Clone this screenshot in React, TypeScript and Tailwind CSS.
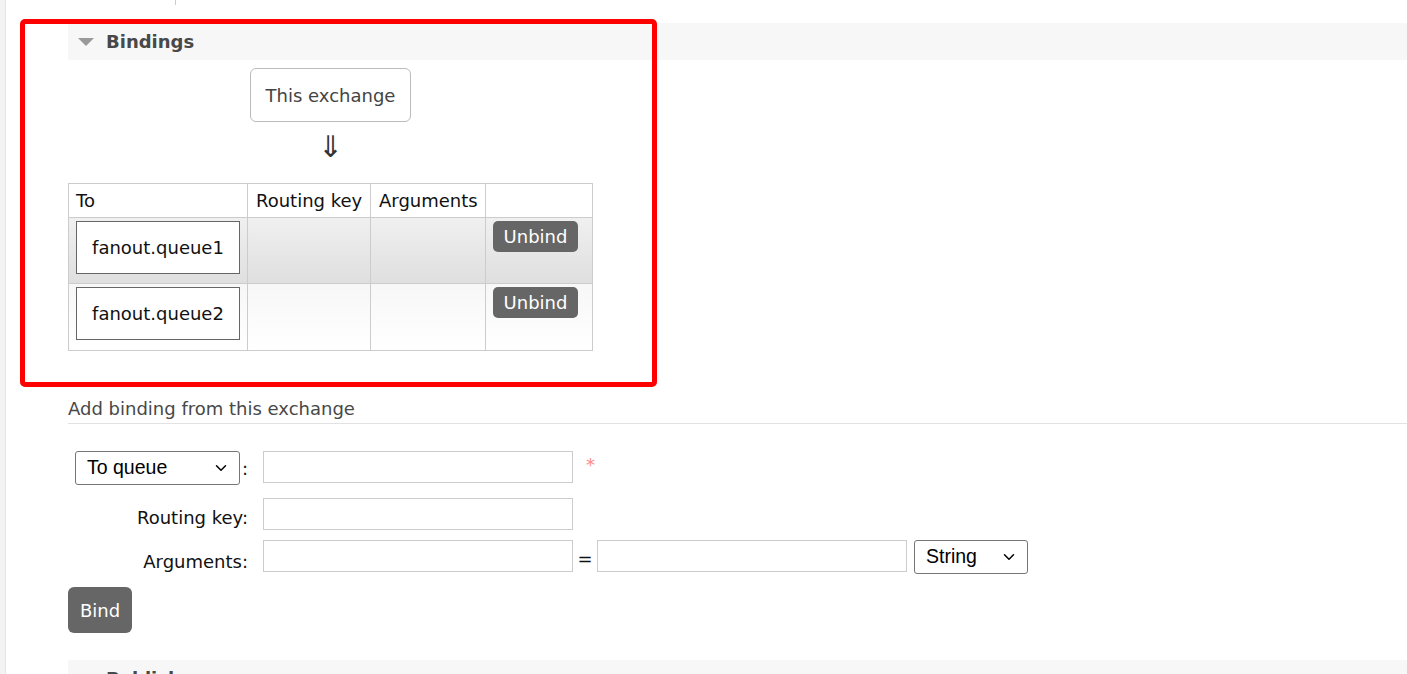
import { ChevronDown } from "lucide-react";

const font = { fontFamily: '"DejaVu Sans", Verdana, sans-serif' };

function Caret() {
  return <span className="inline-block w-0 h-0 border-l-[8px] border-r-[8px] border-t-[8px] border-l-transparent border-r-transparent border-t-[#999]" />;
}

function SectionHeader({ title }: { title: string }) {
  return (
    <div className="h-[37px] bg-[#f7f7f7] flex items-center pl-[10px] gap-[12px]">
      <Caret />
      <span className="text-[18px] font-bold text-[#484848] leading-none">{title}</span>
    </div>
  );
}

function Select({ value, width }: { value: string; width: string }) {
  return (
    <div className={`relative h-[34px] ${width} border border-[#767676] rounded-[3px] bg-white flex items-center pl-[11px]`}>
      <span className="text-[19.5px] text-black leading-none" style={{ fontFamily: '"Liberation Sans", Arial, sans-serif' }}>{value}</span>
      <ChevronDown className="absolute right-[9px] top-[7px] w-[18px] h-[18px] text-black" strokeWidth={2} />
    </div>
  );
}

const rows = ["fanout.queue1", "fanout.queue2"];

export default function App() {
  return (
    <div className="relative h-screen overflow-hidden bg-white flex text-[18px]" style={font}>
      <div className="w-[6px] bg-[#f3f3f3] border-r border-[#e6e6e6]" />
      <div className="flex-1">
        <div className="h-[5px] ml-[169px] border-l border-[#cccccc]" />
        <div className="pl-[62px] pt-[18px]">
          <SectionHeader title="Bindings" />

          <div className="w-[525px] flex flex-col items-center">
            <div className="mt-[8px] w-[161px] h-[54px] rounded-[6px] border border-[#bbbbbb] flex items-center justify-center text-[#444]">This exchange</div>
            <div className="h-[61px] flex items-center justify-center text-[30px] text-[#333] leading-none pb-[12px]">⇓</div>
          </div>

          <div className="w-[525px] border border-[#cccccc] text-[#111] whitespace-nowrap">
            <div className="flex h-[34px] border-b border-[#cccccc]">
              <div className="w-[179px] border-r border-[#cccccc] flex items-center px-[7px]">To</div>
              <div className="w-[123px] border-r border-[#cccccc] flex items-center px-[8px]">Routing key</div>
              <div className="w-[115px] border-r border-[#cccccc] flex items-center px-[8px]">Arguments</div>
              <div className="flex-1" />
            </div>
            {rows.map((q, i) => (
              <div key={q} className={`flex h-[66px] ${i === 0 ? "border-b border-[#cccccc] bg-gradient-to-b from-[#f0f0f0] to-[#dfdfdf]" : "bg-gradient-to-b from-[#f7f7f7] to-white"}`}>
                <div className="w-[179px] border-r border-[#cccccc] pl-[7px] pt-[3px]">
                  <div className="w-[164px] h-[53px] bg-white border border-[#666] flex items-center justify-center">{q}</div>
                </div>
                <div className="w-[123px] border-r border-[#cccccc]" />
                <div className="w-[115px] border-r border-[#cccccc]" />
                <div className="flex-1 pl-[7px] pt-[3px]">
                  <button className="w-[85px] h-[31px] rounded-[5px] bg-[#666] text-white leading-none">Unbind</button>
                </div>
              </div>
            ))}
          </div>

          <h3 className="mt-[47px] text-[18px] leading-[22px] pb-[3px] border-b border-[#e2e2e2] text-[#484848] font-normal">Add binding from this exchange</h3>

          <div className="mt-[27px] flex flex-col gap-[13px]">
            <div className="flex items-start">
              <div className="w-[180px] flex items-center pl-[7px]">
                <Select value="To queue" width="w-[165px]" />
                <span className="ml-[2px] text-[#111]">:</span>
              </div>
              <input className="ml-[15px] w-[310px] h-[32px] border border-[#cccccc] bg-white" />
              <span className="ml-[13px] text-[#ff8888] text-[18px]">*</span>
            </div>
            <div className="flex items-end">
              <label className="w-[180px] text-right leading-[22px] text-[#111] pb-[1px]">Routing key:</label>
              <input className="ml-[15px] w-[310px] h-[32px] border border-[#cccccc] bg-white" />
            </div>
            <div className="flex items-end -mt-[3px]">
              <label className="w-[180px] text-right leading-[22px] text-[#111] pb-[1px]">Arguments:</label>
              <input className="ml-[15px] w-[310px] h-[32px] mb-[2px] border border-[#cccccc] bg-white" />
              <span className="w-[24px] text-center leading-[22px] mb-[4px] text-[#111]">=</span>
              <input className="w-[310px] h-[32px] mb-[2px] border border-[#cccccc] bg-white" />
              <div className="ml-[7px]">
                <Select value="String" width="w-[114px]" />
              </div>
            </div>
          </div>

          <button className="mt-[13px] w-[64px] h-[46px] rounded-[6px] bg-[#666] text-white text-[18px]">Bind</button>

          <div className="mt-[27px]">
            <SectionHeader title="Publish message" />
          </div>
        </div>
      </div>

      <div className="absolute left-[20px] top-[19px] w-[637px] h-[368px] border-[5px] border-[#ff0000] rounded-[5px] pointer-events-none" />
    </div>
  );
}
